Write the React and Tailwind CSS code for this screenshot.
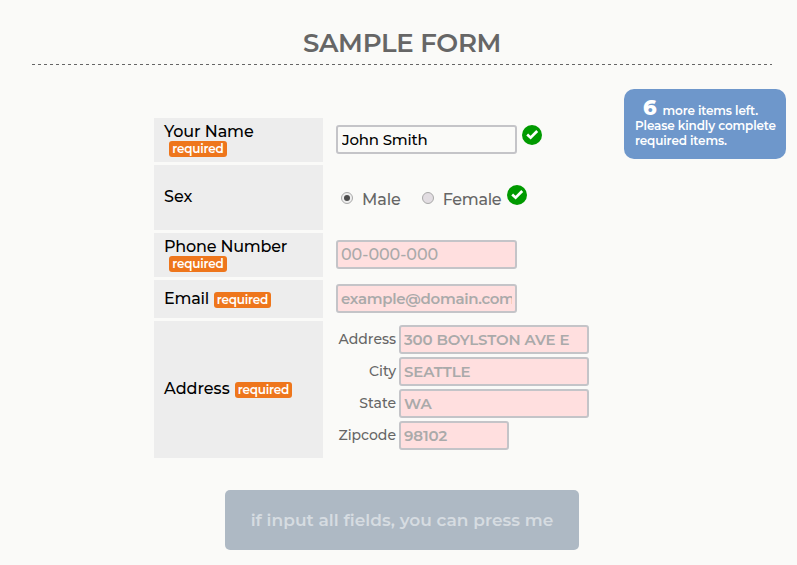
import { useState } from "react"

const fieldClassName =
  "block h-[29px] rounded-[3px] border-2 border-[#c4c4c8] px-[3px] outline-none placeholder:text-[#aaaaaa] placeholder:opacity-100"

const CheckIcon = ({ className }) => (
  <svg viewBox="0 0 20 20" className={`h-5 w-5 shrink-0 ${className}`}>
    <circle cx="10" cy="10" r="10" fill="#009a00" />
    <path
      d="M5.2 9.6 L8.6 12.7 L15.2 6"
      fill="none"
      stroke="#fff"
      strokeWidth="2.7"
    />
  </svg>
)

const RequiredTag = ({ className }) => (
  <span
    className={`flex h-4 items-center justify-center rounded-[3px] bg-[#ee761c] text-xs font-semibold tracking-[-0.2px] text-white ${className}`}
  >
    required
  </span>
)

const Row = ({ label, className, children }) => (
  <div className={`flex ${className}`}>
    <div className="flex w-[169px] shrink-0 flex-wrap content-center items-center bg-[#ededed] pl-2.5 font-medium text-black">
      {label}
    </div>
    <div className="flex items-center pl-[13px]">{children}</div>
  </div>
)

const Radio = ({ value, checked, onChange, className }) => (
  <label className={`flex items-center text-base leading-5 font-medium ${className}`}>
    <span
      className={`mr-[9px] mb-0.5 flex h-3 w-3 items-center justify-center rounded-full border border-[#a9a9a9] ${
        checked ? "bg-[#eeeeee]" : "bg-[#e2dde2]"
      }`}
    >
      {checked && <span className="h-1.5 w-1.5 rounded-full bg-[#4c4c4c]" />}
    </span>
    <input
      type="radio"
      name="sex"
      className="sr-only"
      checked={checked}
      onChange={() => onChange(value)}
    />
    <span className="pt-0.5">{value}</span>
  </label>
)

const ADDRESS_FIELDS = [
  { label: "Address", placeholder: "300 BOYLSTON AVE E", width: "w-[190px]" },
  { label: "City", placeholder: "SEATTLE", width: "w-[190px]" },
  { label: "State", placeholder: "WA", width: "w-[190px]" },
  { label: "Zipcode", placeholder: "98102", width: "w-[110px]" },
]

const App = () => {
  const [sex, setSex] = useState("Male")

  return (
    <div className="relative h-[565px] w-[797px] overflow-hidden bg-[#fafaf8] font-['Montserrat','Inter',sans-serif] text-base text-[#666666]">
      <h1 className="mr-[25px] ml-8 flex h-[65px] items-end justify-center bg-[repeating-linear-gradient(90deg,#666_0_3px,transparent_3px_6px)] bg-[length:100%_1px] bg-bottom bg-no-repeat pb-1.5 text-[26px] leading-8 font-semibold tracking-[-0.3px]">
        SAMPLE FORM
      </h1>

      <form
        className="mt-[53px] ml-[154px] flex w-[450px] flex-col gap-[3px]"
        onSubmit={(event) => event.preventDefault()}
      >
        <Row
          className="h-11"
          label={
            <div>
              <div className="h-[18px] leading-[18px] tracking-[-0.1px]">Your Name</div>
              <RequiredTag className="ml-[5px] w-[58px]" />
            </div>
          }
        >
          <input
            className={`${fieldClassName} mb-px w-[181px] pl-1 text-[15px] font-medium tracking-[-0.2px] text-black`}
            defaultValue="John Smith"
          />
          <CheckIcon className="mb-[10px] ml-[5px]" />
        </Row>

        <Row
          className="h-[65px]"
          label={<span className="pb-0.5">Sex</span>}
        >
          <div className="flex items-center gap-[21px] pt-0.5 pl-[5px]">
            <Radio
              value="Male"
              checked={sex === "Male"}
              onChange={setSex}
              className="tracking-[-0.1px]"
            />
            <Radio
              value="Female"
              checked={sex === "Female"}
              onChange={setSex}
              className="tracking-[-0.3px]"
            />
          </div>
          <CheckIcon className="mb-[5px] ml-[6px]" />
        </Row>

        <Row
          className="h-11"
          label={
            <div>
              <div className="h-[18px] leading-[18px] tracking-[-0.2px]">Phone Number</div>
              <RequiredTag className="ml-[5px] w-[58px]" />
            </div>
          }
        >
          <input
            className={`${fieldClassName} mb-px w-[181px] bg-[#ffdfdf] text-base font-medium tracking-[-0.1px]`}
            placeholder="00-000-000"
          />
        </Row>

        <Row
          className="h-[38px]"
          label={
            <>
              <span className="w-[50px] pb-px tracking-[-0.2px]">Email</span>
              <RequiredTag className="mt-0.5 w-[57px]" />
            </>
          }
        >
          <input
            className={`${fieldClassName} mb-px w-[181px] bg-[#ffdfdf] text-[15px] font-semibold tracking-[-0.3px]`}
            placeholder="example@domain.com"
          />
        </Row>

        <Row
          className="h-[137px]"
          label={
            <>
              <span className="w-[71px] pb-0.5">Address</span>
              <RequiredTag className="mt-px w-[57px]" />
            </>
          }
        >
          <div className="mb-[4px] flex flex-col gap-[3px]">
            {ADDRESS_FIELDS.map((field) => (
              <label key={field.label} className="flex items-center">
                <span className="mr-[3px] w-[60px] pb-px text-right text-sm font-medium">
                  {field.label}
                </span>
                <input
                  className={`${fieldClassName} ${field.width} bg-[#ffdfdf] text-[15px] font-semibold tracking-[-0.15px]`}
                  placeholder={field.placeholder}
                />
              </label>
            ))}
          </div>
        </Row>
      </form>

      <button
        disabled
        className="mt-8 ml-[225px] flex h-[60px] w-[354px] items-center justify-center rounded-[5px] bg-[#aeb9c4] pt-px text-[17px] font-semibold tracking-[0.03px] text-[#d6dce1]"
      >
        if input all fields, you can press me
      </button>

      <aside className="absolute top-[89px] left-[624px] h-[70px] w-[162px] rounded-[10px] bg-[#6e97cb] pt-2 pl-[11px] text-xs leading-[15px] font-semibold tracking-[-0.13px] whitespace-nowrap text-white">
        <div className="flex h-[21px] items-baseline pl-2 leading-[22px]">
          <span className="mr-[6px] text-[21px] font-extrabold">6</span>
          <span>more items left.</span>
        </div>
        <div>Please kindly complete</div>
        <div>required items.</div>
      </aside>
    </div>
  )
}

export default App
